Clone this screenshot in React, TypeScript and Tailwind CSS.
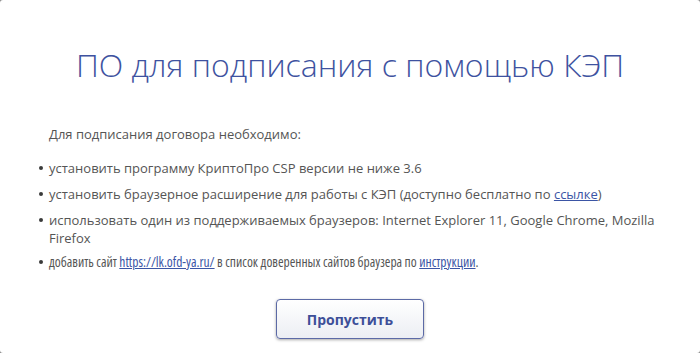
export default function App() {
  const font = { fontFamily: '"Open Sans", "Noto Sans", sans-serif' };

  return (
    <div className="h-[353px] w-[700px] bg-[#8a8a8a]" style={font}>
      <div className="h-full w-full rounded-[3px] bg-white">
        <h1 className="pt-[43px] text-center text-[32px] font-light leading-[44px] text-[#3e52a0]">
          ПО для подписания с помощью КЭП
        </h1>

        <div className="mt-[38px] pl-[39px] pr-[36px] text-[13px] leading-[18px] text-[#555555]">
          <p className="pl-[10px]">Для подписания договора необходимо:</p>

          <ul className="mt-[16px] flex flex-col gap-[8px]">
            <li className="flex">
              <span className="mr-[6px] mt-[7px] h-[4px] w-[4px] shrink-0 rounded-full bg-[#3a3a3a]" />
              <span>установить программу КриптоПро CSP версии не ниже 3.6</span>
            </li>
            <li className="flex">
              <span className="mr-[6px] mt-[7px] h-[4px] w-[4px] shrink-0 rounded-full bg-[#3a3a3a]" />
              <span>
                установить браузерное расширение для работы с КЭП (доступно бесплатно по{' '}
                <a href="#" className="text-[#3b55a5] underline">
                  ссылке
                </a>
                )
              </span>
            </li>
            <li className="flex">
              <span className="mr-[6px] mt-[7px] h-[4px] w-[4px] shrink-0 rounded-full bg-[#3a3a3a]" />
              <span>
                использовать один из поддерживаемых браузеров: Internet Explorer 11, Google Chrome,
                Mozilla Firefox
              </span>
            </li>
            <li className="-mt-[2px] flex">
              <span className="mr-[6px] mt-[7px] h-[4px] w-[4px] shrink-0 rounded-full bg-[#3a3a3a]" />
              <span className="text-[13.5px] leading-[18px] font-stretch-condensed">
                добавить сайт{' '}
                <a href="#" className="text-[#3b55a5] underline">
                  https://lk.ofd-ya.ru/
                </a>{' '}
                в список доверенных сайтов браузера по{' '}
                <a href="#" className="text-[#3b55a5] underline">
                  инструкции
                </a>
                .
              </span>
            </li>
          </ul>
        </div>

        <div className="mt-[28px] flex justify-center">
          <button className="h-[40px] w-[148px] rounded-[4px] border border-[#5c6aa6] bg-gradient-to-b from-white to-[#eceef3] text-[14px] font-bold text-[#3d4f98] shadow-[0_1px_3px_rgba(0,0,0,0.35)]">
            Пропустить
          </button>
        </div>
      </div>
    </div>
  );
}
